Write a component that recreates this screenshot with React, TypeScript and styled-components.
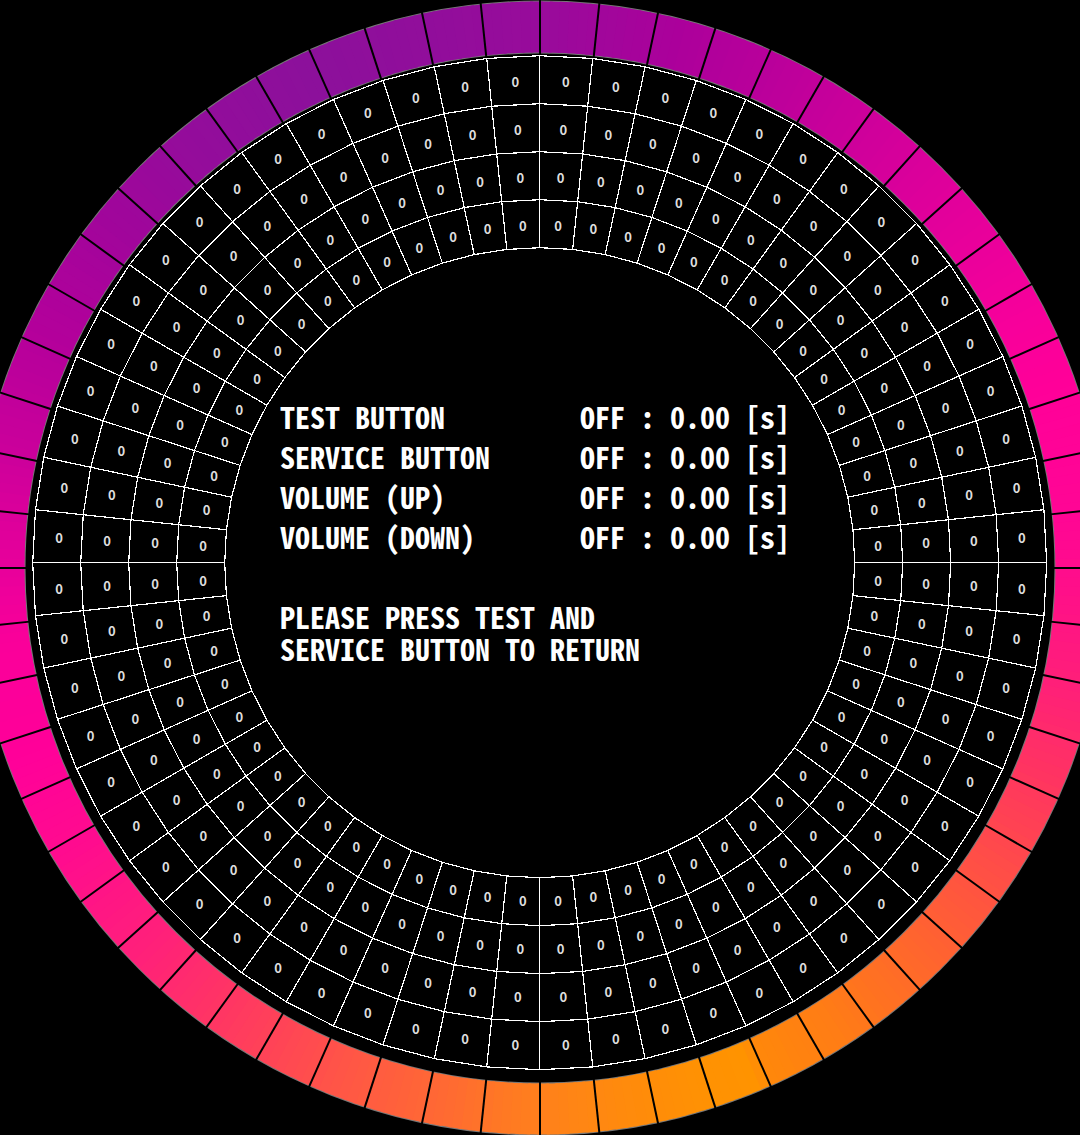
import React from "react";
import styled, { createGlobalStyle } from "styled-components";

const GlobalStyle = createGlobalStyle`
  html, body {
    margin: 0;
    background: #000;
  }
  body {
    overflow-x: hidden;
  }
`;

const Screen = styled.main`
  display: grid;
  background: #000;
  color: #fff;
  overflow: hidden;
`;

const Dial = styled.svg`
  grid-area: 1 / 1;
  display: block;
  width: 100%;
  height: auto;
`;

const SensorValue = styled.text`
  fill: #ddd;
  font-family: "Noto Sans CJK JP", "Liberation Sans", sans-serif;
  font-size: 13px;
  font-weight: 700;
  text-anchor: middle;
`;

const Panel = styled.section`
  grid-area: 1 / 1;
  place-self: center;
  display: grid;
  gap: 44px;
  padding: 0 10px 76px 0;
  font-family: "Noto Sans Mono CJK JP", "Noto Sans CJK JP", "Liberation Mono", monospace;
  font-size: 30px;
  font-weight: 700;
  white-space: pre;
`;

const StatusList = styled.dl`
  display: grid;
  grid-template-columns: 300px auto;
  margin: 0;
  line-height: 40px;
`;

const StatusName = styled.dt`
  margin: 0;
`;

const StatusValue = styled.dd`
  margin: 0;
`;

const Hint = styled.p`
  margin: 0;
  line-height: 32px;
`;

const SEGMENTS = 60;
const RING_RADII = [315, 363, 411, 459, 507];
const VALUE_RADII = [338, 386, 434, 482];

/* Angle in degrees clockwise from the top, and the LED colour there. */
const LED_STOPS: [number, number, number, number][] = [
  [0, 152, 11, 155],
  [15, 172, 0, 155],
  [25, 186, 0, 155],
  [40, 212, 0, 155],
  [50, 228, 0, 155],
  [62, 246, 0, 155],
  [70, 255, 0, 153],
  [85, 255, 6, 148],
  [93, 255, 16, 136],
  [103, 255, 32, 120],
  [112, 255, 51, 98],
  [123, 255, 77, 72],
  [135, 255, 101, 46],
  [147, 255, 124, 22],
  [156, 255, 136, 10],
  [157, 255, 147, 0],
  [163, 255, 145, 3],
  [170, 255, 139, 11],
  [177, 255, 132, 22],
  [183, 255, 122, 34],
  [190, 255, 106, 50],
  [200, 255, 88, 68],
  [210, 255, 66, 88],
  [217, 255, 51, 102],
  [226, 255, 32, 122],
  [240, 255, 10, 144],
  [250, 255, 0, 153],
  [262, 250, 0, 154],
  [270, 232, 0, 155],
  [282, 204, 0, 155],
  [295, 180, 0, 155],
  [308, 162, 5, 155],
  [320, 148, 12, 155],
  [335, 140, 16, 155],
  [350, 146, 13, 155],
  [360, 152, 11, 155],
];

const ledColor = (deg: number) => {
  const next = LED_STOPS.findIndex(([a]) => a > deg);
  const from = LED_STOPS[next - 1];
  const to = LED_STOPS[next];
  const t = (deg - from[0]) / (to[0] - from[0]);
  const mix = (k: 1 | 2 | 3) => Math.round(from[k] + (to[k] - from[k]) * t);
  return `rgb(${mix(1)}, ${mix(2)}, ${mix(3)})`;
};

const point = (cx: number, cy: number, r: number, deg: number): [number, number] => {
  const a = (deg * Math.PI) / 180;
  return [cx + r * Math.sin(a), cy - r * Math.cos(a)];
};

const angles = Array.from({ length: SEGMENTS }, (_, i) => i * 6);
const degrees = Array.from({ length: 360 }, (_, i) => i);

const inputs = ["TEST BUTTON", "SERVICE BUTTON", "VOLUME (UP)", "VOLUME (DOWN)"];

function LedRing() {
  return (
    <g>
      <circle cx="540" cy="568" r="541" fill="none" stroke="#777" strokeWidth="53" />
      {degrees.map((deg) => {
        const start = point(540, 568, 541, deg);
        const end = point(540, 568, 541, deg + 1.3);
        return (
          <path
            key={deg}
            d={`M${start.join(" ")} A541 541 0 0 1 ${end.join(" ")}`}
            fill="none"
            stroke={ledColor(deg + 0.5)}
            strokeWidth="51"
          />
        );
      })}
      {angles.map((deg) => {
        const [x1, y1] = point(540, 568, 513, deg);
        const [x2, y2] = point(540, 568, 569, deg);
        return <line key={deg} x1={x1} y1={y1} x2={x2} y2={y2} stroke="#000" strokeWidth="2" />;
      })}
    </g>
  );
}

const GRID_X = 539.7;
const GRID_Y = 562.7;

function SensorGrid() {
  return (
    <g>
      <g stroke="#fff" strokeWidth="1.2" fill="none" shapeRendering="crispEdges">
        {RING_RADII.map((r) => (
          <polygon key={r} points={angles.map((d) => point(GRID_X, GRID_Y, r, d).join(",")).join(" ")} />
        ))}
        {angles.map((deg) => {
          const [x1, y1] = point(GRID_X, GRID_Y, 315, deg);
          const [x2, y2] = point(GRID_X, GRID_Y, 507, deg);
          return <line key={deg} x1={x1} y1={y1} x2={x2} y2={y2} strokeWidth={deg % 90 === 0 ? 1 : 1.2} />;
        })}
      </g>
      {VALUE_RADII.map((r) =>
        angles.map((deg) => {
          const [x, y] = point(540.5, 568.3, r, deg + 3);
          return (
            <SensorValue key={`${r}-${deg}`} x={x} y={Math.round(y)}>
              0
            </SensorValue>
          );
        })
      )}
    </g>
  );
}

export default function App() {
  return (
    <>
      <GlobalStyle />
      <Screen>
        <Dial viewBox="0 0 1080 1135" role="img" aria-label="Touch sensor and LED test">
          <LedRing />
          <SensorGrid />
        </Dial>
        <Panel>
          <StatusList>
            {inputs.map((name) => (
              <React.Fragment key={name}>
                <StatusName>{name}</StatusName>
                <StatusValue>OFF : 0.00 [s]</StatusValue>
              </React.Fragment>
            ))}
          </StatusList>
          <Hint>{"PLEASE PRESS TEST AND\nSERVICE BUTTON TO RETURN"}</Hint>
        </Panel>
      </Screen>
    </>
  );
}
